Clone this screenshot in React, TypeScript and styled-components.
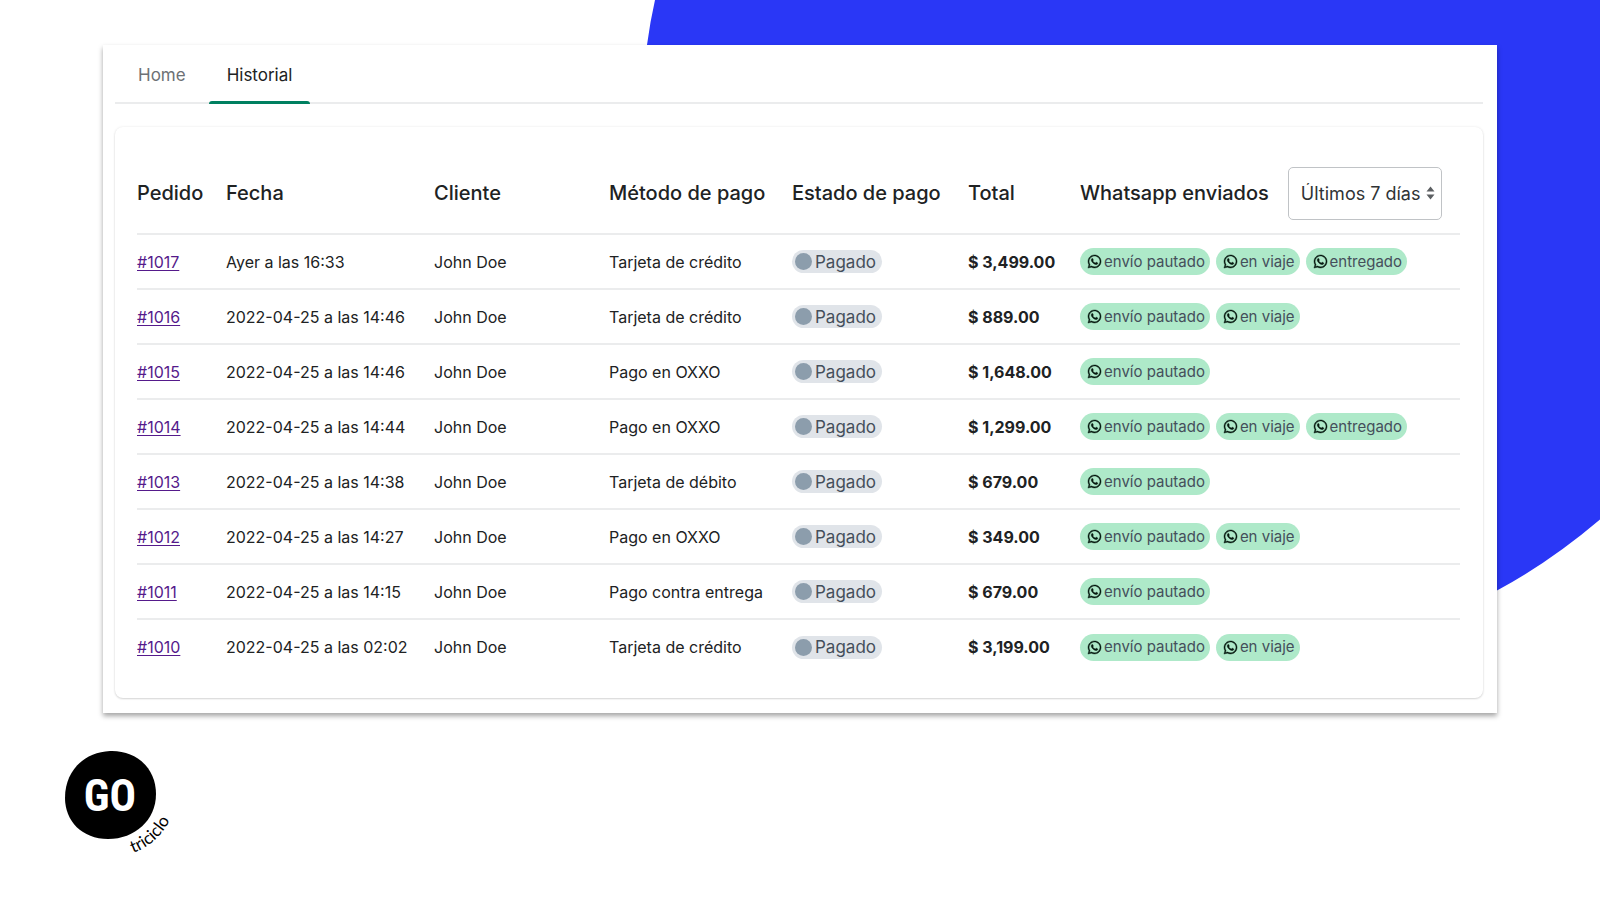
import React, { useState } from "react";
import styled, { createGlobalStyle } from "styled-components";
import { FaWhatsapp } from "react-icons/fa";

const GlobalStyle = createGlobalStyle`
  *, *::before, *::after { box-sizing: border-box; }
  body {
    margin: 0;
    background: #ffffff;
    color: #202223;
    font-family: Inter, "Liberation Sans", sans-serif;
    font-size: 16px;
    line-height: 24px;
    overflow-x: hidden;
  }
`;

const Page = styled.div`
  position: relative;
  min-height: 100vh;
  padding: 45px 103px 40px;
  overflow: hidden;
`;

const Backdrop = styled.svg`
  position: absolute;
  top: 0;
  right: 0;
  width: 960px;
  height: 680px;
`;

const Panel = styled.main`
  position: relative;
  padding: 0 14px 15px 12px;
  background: #ffffff;
  box-shadow: 0 3px 5px rgba(0, 0, 0, 0.36);
`;

const Tabs = styled.nav`
  display: flex;
  gap: 5px;
  height: 59px;
  padding-left: 5px;
  border-bottom: 2px solid #ebeced;
`;

const Tab = styled.button<{ $active: boolean }>`
  position: relative;
  height: 59px;
  padding: 0 18px;
  border: 0;
  background: transparent;
  color: ${(p) => (p.$active ? "#202223" : "#6d7175")};
  font: inherit;
  font-size: 17px;
  cursor: pointer;

  &::after {
    content: "";
    position: absolute;
    right: 0;
    bottom: 0;
    left: 0;
    height: 3px;
    border-radius: 3px 3px 0 0;
    background: ${(p) => (p.$active ? "#008060" : "transparent")};
  }
`;

const Card = styled.section`
  margin-top: 23px;
  padding: 26px 23px 24px 22px;
  border-radius: 8px;
  background: #ffffff;
  box-shadow: 0 0 3px rgba(23, 24, 24, 0.08), 0 1px 2px rgba(0, 0, 0, 0.14);
`;

const Table = styled.table`
  width: 100%;
  table-layout: fixed;
  border-collapse: collapse;
`;

const HeaderCell = styled.th`
  height: 81px;
  padding: 0;
  border-bottom: 2px solid #ebeced;
  font-size: 20px;
  font-weight: 500;
  line-height: 26px;
  text-align: left;
  white-space: nowrap;
`;

const Row = styled.tr`
  &:not(:last-child) > td { border-bottom: 2px solid #ebeced; }
`;

const Cell = styled.td<{ $strong?: boolean }>`
  height: 55px;
  padding: 0;
  font-weight: ${(p) => (p.$strong ? 700 : 400)};
  white-space: nowrap;
`;

const OrderLink = styled.a`
  color: #551a8b;
  text-decoration: underline;
  text-underline-offset: 2px;
`;

const HeaderGroup = styled.div`
  display: flex;
  align-items: center;
  gap: 19px;
`;

const SelectBox = styled.div`
  position: relative;
`;

const Select = styled.select`
  appearance: none;
  display: block;
  width: 154px;
  height: 53px;
  padding: 0 12px;
  border: 1px solid #c0c3c6;
  border-radius: 5px;
  background: #ffffff;
  color: #303335;
  font-family: inherit;
  font-size: 18px;
`;

const SelectArrows = styled.svg`
  position: absolute;
  top: 19px;
  right: 7px;
  width: 9px;
  height: 14px;
  pointer-events: none;
`;

const Badges = styled.div`
  display: flex;
  gap: 6px;
`;

const StatusBadge = styled.span`
  display: flex;
  align-items: center;
  gap: 3px;
  width: max-content;
  height: 23px;
  padding: 0 6px 0 3px;
  border-radius: 12px;
  background: #e0e4e9;
  color: #454f5b;
  font-size: 17px;
`;

const StatusDot = styled.span`
  width: 17px;
  height: 17px;
  border-radius: 50%;
  background: #8c9dac;
`;

const MessageBadge = styled.span`
  display: flex;
  align-items: center;
  gap: 2px;
  height: 27px;
  padding: 0 5px 0 7px;
  border-radius: 14px;
  background: #aee9c9;
  color: #454f5b;
  font-size: 15px;

  svg {
    width: 15px;
    height: 15px;
    overflow: visible;
    color: #06180f;
    stroke: #06180f;
    stroke-width: 14px;
  }
`;

const Footer = styled.footer`
  display: flex;
  margin: 36px 0 0 -43px;
`;

const Logo = styled.svg`
  display: block;
  width: 120px;
  height: 110px;
`;

const columns = [
  { title: "Pedido", width: 89 },
  { title: "Fecha", width: 208 },
  { title: "Cliente", width: 175 },
  { title: "Método de pago", width: 183 },
  { title: "Estado de pago", width: 176 },
  { title: "Total", width: 112 },
  { title: "Whatsapp enviados", width: 380 },
];

const stages = ["envío pautado", "en viaje", "entregado"];

const orders = [
  { id: "#1017", date: "Ayer a las 16:33", method: "Tarjeta de crédito", total: "$ 3,499.00", sent: 3 },
  { id: "#1016", date: "2022-04-25 a las 14:46", method: "Tarjeta de crédito", total: "$ 889.00", sent: 2 },
  { id: "#1015", date: "2022-04-25 a las 14:46", method: "Pago en OXXO", total: "$ 1,648.00", sent: 1 },
  { id: "#1014", date: "2022-04-25 a las 14:44", method: "Pago en OXXO", total: "$ 1,299.00", sent: 3 },
  { id: "#1013", date: "2022-04-25 a las 14:38", method: "Tarjeta de débito", total: "$ 679.00", sent: 1 },
  { id: "#1012", date: "2022-04-25 a las 14:27", method: "Pago en OXXO", total: "$ 349.00", sent: 2 },
  { id: "#1011", date: "2022-04-25 a las 14:15", method: "Pago contra entrega", total: "$ 679.00", sent: 1 },
  { id: "#1010", date: "2022-04-25 a las 02:02", method: "Tarjeta de crédito", total: "$ 3,199.00", sent: 2 },
];

function RangeSelect() {
  return (
    <SelectBox>
      <Select aria-label="Periodo" defaultValue="7">
        <option value="7">Últimos 7 días</option>
      </Select>
      <SelectArrows viewBox="0 0 9 14" aria-hidden="true">
        <path d="M0.5 5.5 4.5 0.5 8.5 5.5ZM0.5 8.5 4.5 13.5 8.5 8.5Z" fill="#5c5f62" />
      </SelectArrows>
    </SelectBox>
  );
}

function GoLogo() {
  return (
    <Logo viewBox="0 0 120 110" role="img" aria-label="GO triciclo">
      <path
        d="M50 2C76 1 96 19 96 45C96 71 75 90 48 90C22 90 5 72 5 49C5 21 25 3 50 2Z"
        fill="#000000"
      />
      <text
        x="50"
        y="62"
        textAnchor="middle"
        fontFamily="'Roboto Condensed', 'Liberation Sans Narrow', Roboto, sans-serif"
        fontWeight="700"
        fontSize="44"
        fill="#ffffff"
      >
        GO
      </text>
      <path id="logo-arc" d="M73 104C92 97 108 82 116 56" fill="none" />
      <text fontFamily="Lato, sans-serif" fontSize="17" fill="#000000">
        <textPath href="#logo-arc">triciclo</textPath>
      </text>
    </Logo>
  );
}

export default function App() {
  const [tab, setTab] = useState("Historial");
  return (
    <>
      <GlobalStyle />
      <Page>
        <Backdrop viewBox="640 0 960 680" aria-hidden="true">
          <path
            d="M655 0Q650 22 647 45C620 390 860 658 1220 658C1320 658 1412 640 1497 590.5Q1550 562 1600 519.5V0Z"
            fill="#2a37f6"
          />
        </Backdrop>
        <Panel>
          <Tabs>
            {["Home", "Historial"].map((name) => (
              <Tab key={name} type="button" $active={tab === name} onClick={() => setTab(name)}>
                {name}
              </Tab>
            ))}
          </Tabs>
          <Card>
            <Table>
              <colgroup>
                {columns.map((c) => (
                  <col key={c.title} width={c.width} />
                ))}
              </colgroup>
              <thead>
                <tr>
                  {columns.map((c, i) => (
                    <HeaderCell key={c.title} scope="col">
                      {i === columns.length - 1 ? (
                        <HeaderGroup>
                          <span>{c.title}</span>
                          <RangeSelect />
                        </HeaderGroup>
                      ) : (
                        c.title
                      )}
                    </HeaderCell>
                  ))}
                </tr>
              </thead>
              <tbody>
                {orders.map((o) => (
                  <Row key={o.id}>
                    <Cell>
                      <OrderLink href={o.id}>{o.id}</OrderLink>
                    </Cell>
                    <Cell>{o.date}</Cell>
                    <Cell>John Doe</Cell>
                    <Cell>{o.method}</Cell>
                    <Cell>
                      <StatusBadge>
                        <StatusDot />
                        Pagado
                      </StatusBadge>
                    </Cell>
                    <Cell $strong>{o.total}</Cell>
                    <Cell>
                      <Badges>
                        {stages.slice(0, o.sent).map((s) => (
                          <MessageBadge key={s}>
                            <FaWhatsapp aria-hidden="true" />
                            {s}
                          </MessageBadge>
                        ))}
                      </Badges>
                    </Cell>
                  </Row>
                ))}
              </tbody>
            </Table>
          </Card>
        </Panel>
        <Footer>
          <GoLogo />
        </Footer>
      </Page>
    </>
  );
}
